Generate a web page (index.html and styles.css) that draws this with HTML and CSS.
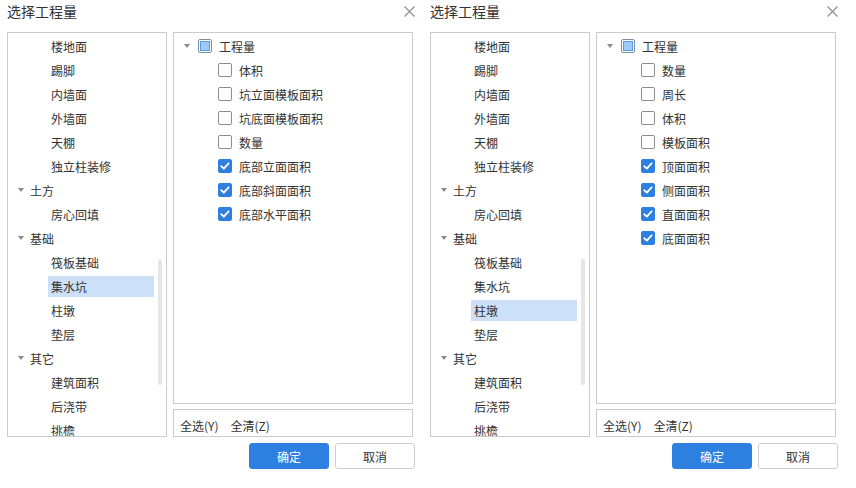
FILE: index.html
```html
<!DOCTYPE html>
<html lang="zh">
  <head>
    <meta charset="UTF-8" />
    <title>选择工程量</title>
    <link rel="stylesheet" href="styles.css">
  </head>
  <body>
    <div class="screen">
      <!-- 集水坑 -->
      <section class="dialog">
        <header class="dialog-head">
          <h1 class="dialog-title">选择工程量</h1>
          <button class="close-btn" aria-label="关闭">
            <svg width="11" height="11" viewBox="0 0 11 11"><path d="M0.5 0.5L10.5 10.5M10.5 0.5L0.5 10.5" stroke="#8c8c8c" stroke-width="1.1" fill="none"/></svg>
          </button>
        </header>
        <div class="dialog-body">
          <div class="panel type-tree">
            <ul class="tree">
              <li class="leaf"><span class="label">楼地面</span></li>
              <li class="leaf"><span class="label">踢脚</span></li>
              <li class="leaf"><span class="label">内墙面</span></li>
              <li class="leaf"><span class="label">外墙面</span></li>
              <li class="leaf"><span class="label">天棚</span></li>
              <li class="leaf"><span class="label">独立柱装修</span></li>
              <li class="group"><span class="caret"></span>土方</li>
              <li class="leaf"><span class="label">房心回填</span></li>
              <li class="group"><span class="caret"></span>基础</li>
              <li class="leaf"><span class="label">筏板基础</span></li>
              <li class="leaf"><span class="label selected">集水坑</span></li>
              <li class="leaf"><span class="label">柱墩</span></li>
              <li class="leaf"><span class="label">垫层</span></li>
              <li class="group"><span class="caret"></span>其它</li>
              <li class="leaf"><span class="label">建筑面积</span></li>
              <li class="leaf"><span class="label">后浇带</span></li>
              <li class="leaf"><span class="label">挑檐</span></li>
            </ul>
            <div class="scroll-thumb"></div>
          </div>
          <div class="panel qty-tree">
            <ul class="tree">
              <li class="root"><span class="caret"></span><span class="check partial"><i></i></span>工程量</li>
              <li class="item"><span class="check"></span>体积</li>
              <li class="item"><span class="check"></span>坑立面模板面积</li>
              <li class="item"><span class="check"></span>坑底面模板面积</li>
              <li class="item"><span class="check"></span>数量</li>
              <li class="item"><span class="check on"></span>底部立面面积</li>
              <li class="item"><span class="check on"></span>底部斜面面积</li>
              <li class="item"><span class="check on"></span>底部水平面积</li>
            </ul>
          </div>
          <div class="panel action-bar">
            <a class="text-link">全选(Y)</a>
            <a class="text-link">全清(Z)</a>
          </div>
        </div>
        <footer class="dialog-foot">
          <button class="btn btn-primary">确定</button>
          <button class="btn">取消</button>
        </footer>
      </section>

      <!-- 柱墩 -->
      <section class="dialog">
        <header class="dialog-head">
          <h1 class="dialog-title">选择工程量</h1>
          <button class="close-btn" aria-label="关闭">
            <svg width="11" height="11" viewBox="0 0 11 11"><path d="M0.5 0.5L10.5 10.5M10.5 0.5L0.5 10.5" stroke="#8c8c8c" stroke-width="1.1" fill="none"/></svg>
          </button>
        </header>
        <div class="dialog-body">
          <div class="panel type-tree">
            <ul class="tree">
              <li class="leaf"><span class="label">楼地面</span></li>
              <li class="leaf"><span class="label">踢脚</span></li>
              <li class="leaf"><span class="label">内墙面</span></li>
              <li class="leaf"><span class="label">外墙面</span></li>
              <li class="leaf"><span class="label">天棚</span></li>
              <li class="leaf"><span class="label">独立柱装修</span></li>
              <li class="group"><span class="caret"></span>土方</li>
              <li class="leaf"><span class="label">房心回填</span></li>
              <li class="group"><span class="caret"></span>基础</li>
              <li class="leaf"><span class="label">筏板基础</span></li>
              <li class="leaf"><span class="label">集水坑</span></li>
              <li class="leaf"><span class="label selected">柱墩</span></li>
              <li class="leaf"><span class="label">垫层</span></li>
              <li class="group"><span class="caret"></span>其它</li>
              <li class="leaf"><span class="label">建筑面积</span></li>
              <li class="leaf"><span class="label">后浇带</span></li>
              <li class="leaf"><span class="label">挑檐</span></li>
            </ul>
            <div class="scroll-thumb"></div>
          </div>
          <div class="panel qty-tree">
            <ul class="tree">
              <li class="root"><span class="caret"></span><span class="check partial"><i></i></span>工程量</li>
              <li class="item"><span class="check"></span>数量</li>
              <li class="item"><span class="check"></span>周长</li>
              <li class="item"><span class="check"></span>体积</li>
              <li class="item"><span class="check"></span>模板面积</li>
              <li class="item"><span class="check on"></span>顶面面积</li>
              <li class="item"><span class="check on"></span>侧面面积</li>
              <li class="item"><span class="check on"></span>直面面积</li>
              <li class="item"><span class="check on"></span>底面面积</li>
            </ul>
          </div>
          <div class="panel action-bar">
            <a class="text-link">全选(Y)</a>
            <a class="text-link">全清(Z)</a>
          </div>
        </div>
        <footer class="dialog-foot">
          <button class="btn btn-primary">确定</button>
          <button class="btn">取消</button>
        </footer>
      </section>
    </div>
  </body>
</html>
```

FILE: styles.css
```css
* {
  margin: 0;
  padding: 0;
  box-sizing: border-box;
}

body {
  font-family: "Noto Sans CJK SC", "Liberation Sans", sans-serif;
  font-size: 12px;
  color: #333;
  background: #fff;
}

.screen {
  display: flex;
  width: 856px;
  height: 488px;
}

/* Dialog */
.dialog {
  width: 423px;
  padding: 0 9px 0 7px;
}

.dialog-head {
  height: 32px;
  display: flex;
  justify-content: space-between;
  align-items: flex-start;
}

.dialog-title {
  font-size: 14px;
  font-weight: 400;
  line-height: 22px;
  color: #333;
}

.close-btn {
  border: none;
  background: none;
  width: 11px;
  height: 11px;
  margin-top: 6px;
  margin-right: -1px;
  display: flex;
}

.dialog-body {
  display: grid;
  grid-template-columns: 160px 240px;
  grid-template-rows: 372px 28px;
  column-gap: 6px;
  row-gap: 5px;
}

.panel {
  border: 1px solid #cbcbcb;
  background: #fff;
}

.type-tree {
  grid-row: 1 / 3;
  position: relative;
  overflow: hidden;
}

.tree {
  list-style: none;
  padding-top: 1px;
}

.tree li {
  height: 24px;
  display: flex;
  align-items: center;
  white-space: nowrap;
}

.caret {
  width: 0;
  height: 0;
  border-left: 3.5px solid transparent;
  border-right: 3.5px solid transparent;
  border-top: 4px solid #8a8a8a;
}

/* Left tree: component types */
.type-tree .group {
  padding-left: 10px;
}

.type-tree .group .caret {
  margin-right: 6px;
}

.type-tree .leaf {
  padding-left: 40px;
}

.label {
  display: block;
  width: 106px;
  height: 21px;
  line-height: 21px;
  padding-left: 3px;
}

.label.selected {
  background: #cce0f8;
}

.scroll-thumb {
  position: absolute;
  top: 226px;
  right: 4px;
  width: 4px;
  height: 126px;
  border-radius: 2px;
  background: #e6e6e6;
}

/* Right tree: quantities */
.qty-tree .root {
  padding-left: 10px;
}

.qty-tree .root .caret {
  margin-right: 8px;
}

.qty-tree .item {
  padding-left: 44px;
}

.check {
  width: 14px;
  height: 14px;
  border: 1px solid #8d8d8d;
  border-radius: 2px;
  background: #fff;
  margin-right: 7px;
  flex-shrink: 0;
}

.check.partial {
  padding: 1px;
  border-color: #7f8fa3;
}

.check.partial i {
  display: block;
  width: 100%;
  height: 100%;
  background: #9fcafb;
  border: 1px solid #5b9ae6;
}

.check.on {
  border-color: #2f7fe0;
  background: #2f7fe0 url("data:image/svg+xml,%3Csvg xmlns='http://www.w3.org/2000/svg' width='14' height='14' viewBox='0 0 14 14'%3E%3Cpath d='M3.2 7.2L5.8 9.6L10.6 4.4' stroke='white' stroke-width='1.8' fill='none' stroke-linecap='round' stroke-linejoin='round'/%3E%3C/svg%3E") center / 14px 14px no-repeat;
}

/* Bottom bar */
.action-bar {
  grid-column: 2;
  display: flex;
  align-items: center;
  gap: 12px;
  padding: 5px 0 0 6px;
}

.text-link {
  color: #333;
  cursor: pointer;
}

/* Footer buttons */
.dialog-foot {
  display: flex;
  justify-content: flex-end;
  gap: 6px;
  margin-top: 6px;
  margin-right: -1px;
}

.btn {
  width: 80px;
  height: 26px;
  border: 1px solid #cfcfcf;
  border-radius: 3px;
  background: #fff;
  color: #333;
  font-family: inherit;
  font-size: 12px;
}

.btn-primary {
  background: #2e80e0;
  border-color: #2e80e0;
  color: #fff;
}
```
